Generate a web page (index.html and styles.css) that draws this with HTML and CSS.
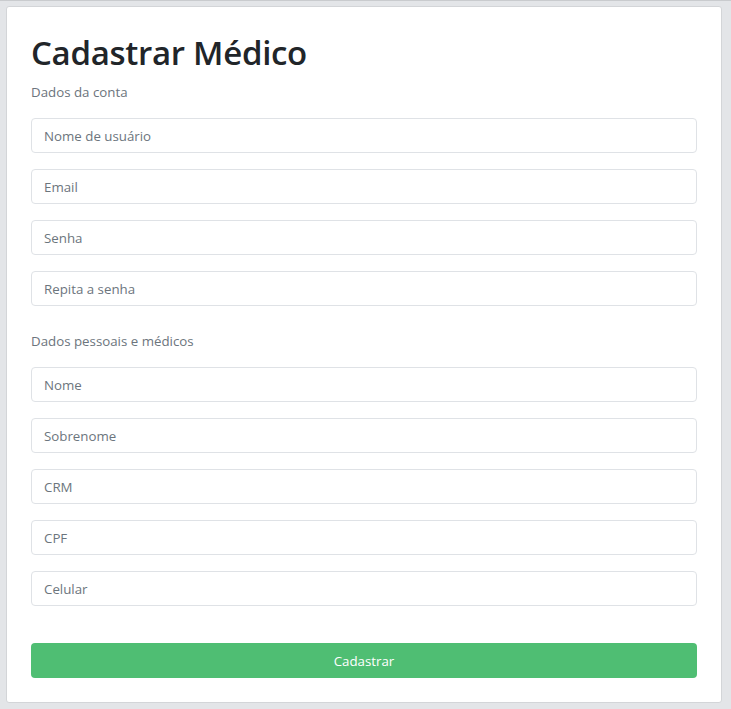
FILE: index.html
```html
<!DOCTYPE html>
<html lang="pt-BR">
<head>
<meta charset="utf-8">
<title>Cadastrar Médico</title>
<link rel="stylesheet" href="styles.css">
</head>
<body>
<div class="page">
  <form class="card">
    <h1 class="title">Cadastrar Médico</h1>
    <p class="section-label">Dados da conta</p>
    <div class="field-group">
      <input class="input" type="text" placeholder="Nome de usuário">
      <input class="input" type="email" placeholder="Email">
      <input class="input" type="password" placeholder="Senha">
      <input class="input" type="password" placeholder="Repita a senha">
    </div>
    <p class="section-label second">Dados pessoais e médicos</p>
    <div class="field-group">
      <input class="input" type="text" placeholder="Nome">
      <input class="input" type="text" placeholder="Sobrenome">
      <input class="input" type="text" placeholder="CRM">
      <input class="input" type="text" placeholder="CPF">
      <input class="input" type="text" placeholder="Celular">
    </div>
    <button class="submit" type="button">Cadastrar</button>
  </form>
</div>
</body>
</html>
```
FILE: styles.css
```css
* { box-sizing: border-box; }
html, body {
  margin: 0;
  padding: 0;
  background: #e3e5e8;
  font-family: "Open Sans", "Noto Sans", sans-serif;
  font-size: 14px;
  color: #212529;
}
.page {
  padding: 5px 9px 6px 6px;
  border-top: 1px solid #c9cbce;
}
.card {
  background: #fff;
  border: 1px solid #d3d5d8;
  border-radius: 3px;
  padding: 24px 24px 24px;
  display: flex;
  flex-direction: column;
}
.title {
  margin: 0;
  font-size: 33px;
  font-weight: 600;
  line-height: 43px;
  color: #212529;
  letter-spacing: -0.3px;
}
.section-label {
  margin: 0;
  color: #6c757d;
  font-size: 13.3px;
  line-height: 20px;
  padding-top: 8px;
}
.section-label.second {
  padding-top: 25px;
}
.field-group {
  display: flex;
  flex-direction: column;
  gap: 16px;
  margin-top: 16px;
}
.input {
  display: block;
  width: 100%;
  height: 35px;
  padding: 6px 12px;
  border: 1px solid #dfe2e6;
  border-radius: 4px;
  font-family: inherit;
  font-size: 13.3px;
  color: #495057;
  background: #fff;
}
.input::placeholder {
  color: #6c757d;
  opacity: 1;
}
.submit {
  margin-top: 37px;
  height: 35px;
  width: 100%;
  border: none;
  border-radius: 4px;
  background: #4fbe73;
  color: #fff;
  font-family: inherit;
  font-size: 13.3px;
}
```
